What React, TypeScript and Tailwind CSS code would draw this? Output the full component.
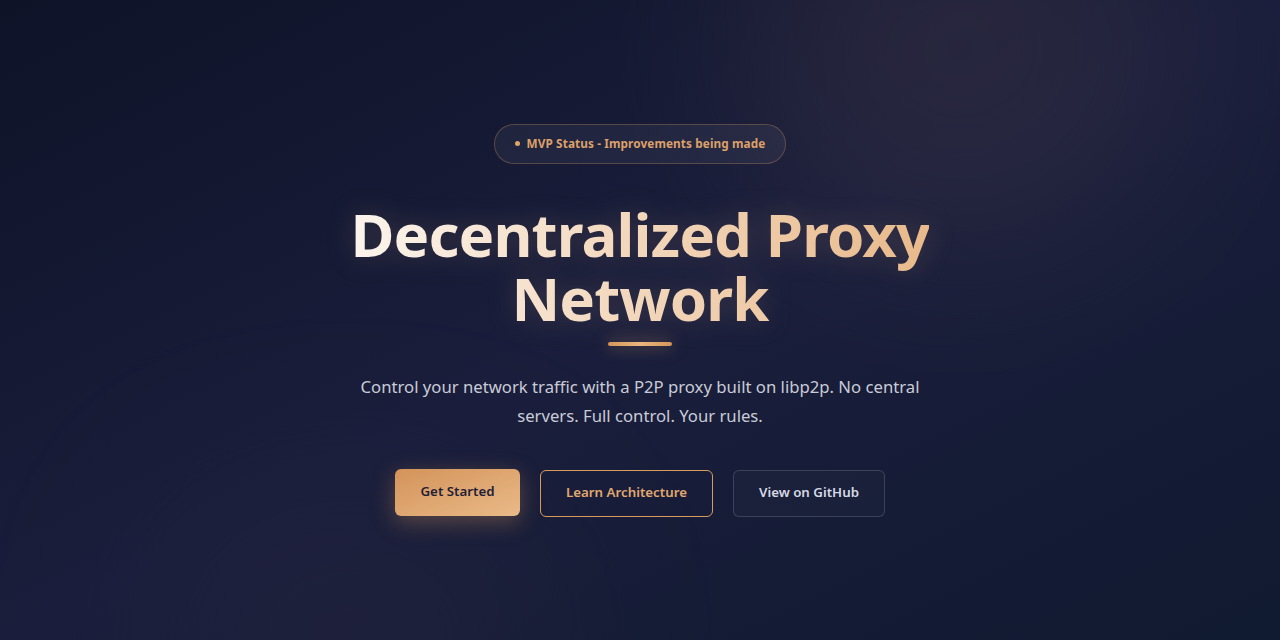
export default function App() {
  return (
    <div
      className="relative h-screen w-full overflow-hidden bg-gradient-to-br from-[#0e1328] via-[#1a1e3c] to-[#101a30] flex items-center justify-center"
      style={{ fontFamily: '"Noto Sans", "Open Sans", sans-serif' }}
    >
      {/* background glows */}
      <div className="absolute -top-[150px] left-[740px] w-[440px] h-[400px] rounded-full bg-[#3a3345] opacity-45 blur-[90px]" />
      <div className="absolute top-[500px] left-[160px] w-[380px] h-[280px] rounded-full bg-[#2a2840] opacity-40 blur-[90px]" />

      <div className="relative flex flex-col items-center text-center">
        <div className="flex items-center gap-[7px] h-[40px] px-[20px] rounded-full border border-[#d4965a]/30 bg-white/[0.05]">
          <span className="w-[5px] h-[5px] rounded-full bg-[#e0a468]" />
          <span className="text-[11.75px] font-bold text-[#dca06a] tracking-[0.01em]">
            MVP Status - Improvements being made
          </span>
        </div>

        <h1 className="mt-[38px] text-[60px] leading-[64px] font-bold tracking-[-0.015em] bg-gradient-to-r from-[#fbf4ec] to-[#e8b98a] bg-clip-text text-transparent drop-shadow-[0_0_14px_rgba(232,185,138,0.18)]">
          Decentralized Proxy
          <br />
          Network
        </h1>

        <div className="mt-[12px] w-[64px] h-[4px] rounded-full bg-gradient-to-r from-[#d4965a] via-[#eab680] to-[#d4965a] shadow-[0_0_16px_rgba(232,170,110,0.6)]" />

        <p className="mt-[26px] max-w-[580px] text-[16.7px] leading-[29px] text-[#c9cbd7]">
          Control your network traffic with a P2P proxy built on libp2p. No central servers. Full control. Your rules.
        </p>

        <div className="mt-[40px] flex items-center gap-[20px]">
          <button className="h-[47px] w-[125px] rounded-md bg-gradient-to-br from-[#d4935a] to-[#e9ba88] text-[13.3px] font-semibold text-[#1f2036] shadow-[0_6px_22px_rgba(212,150,90,0.35)] -translate-y-[1px]">
            Get Started
          </button>
          <button className="h-[47px] w-[173px] rounded-md border-[1.5px] border-[#d99a5e] text-[13.3px] font-semibold text-[#e2a86f]">
            Learn Architecture
          </button>
          <button className="h-[47px] w-[152px] rounded-md border border-white/15 bg-white/[0.02] text-[13.3px] font-semibold text-[#d6d9e5]">
            View on GitHub
          </button>
        </div>
      </div>
    </div>
  );
}
